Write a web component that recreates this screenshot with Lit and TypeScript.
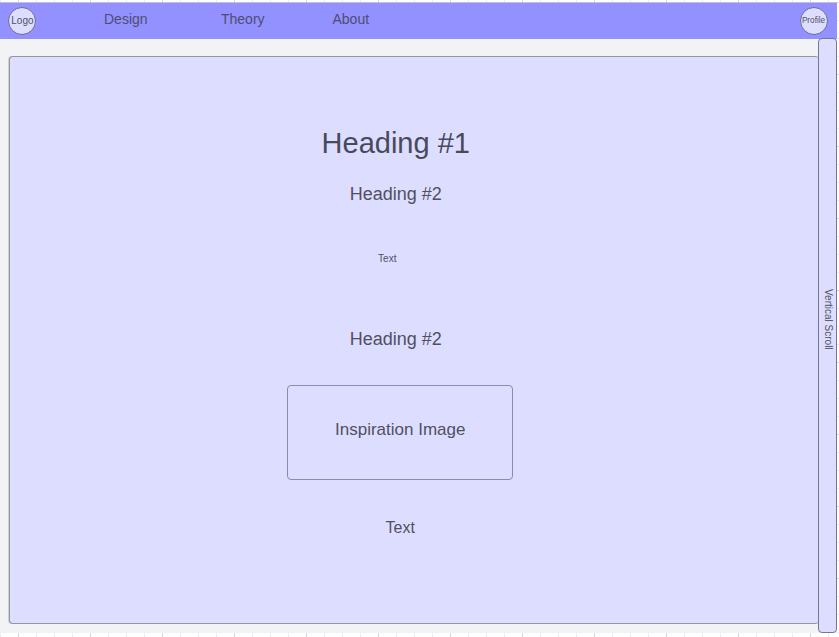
import { LitElement, html, css } from "lit";
import { customElement } from "lit/decorators.js";

@customElement("app-root")
export class AppRoot extends LitElement {
  static styles = css`
    :host {
      display: block;
      box-sizing: border-box;
      width: 839px;
      height: 637px;
      overflow: hidden;
      padding-top: 2px;
      font-family: "Liberation Sans", Arial, sans-serif;
      color: #505063;
      background:
        repeating-linear-gradient(90deg, transparent 0 18px, #dadada 18px 19px, transparent 19px 72px),
        repeating-linear-gradient(90deg, #ececec 0 1px, transparent 1px 18px),
        repeating-linear-gradient(180deg, transparent 0 2px, #dadada 2px 3px, transparent 3px 72px),
        repeating-linear-gradient(180deg, transparent 0 2px, #ececec 2px 3px, transparent 3px 18px),
        #fff;
    }
    * {
      box-sizing: border-box;
    }
    .frame {
      width: 837px;
      height: 631px;
      display: flex;
      flex-direction: column;
      background: #f1f3f5;
    }
    .bar {
      height: 37px;
      flex: none;
      display: flex;
      align-items: flex-start;
      border-top: 1px solid #c2c2d6;
      background: #9391ff;
      padding: 4px 9.5px 0 8.4px;
    }
    .disc {
      width: 28px;
      height: 28px;
      flex: none;
      border: 1px solid #6c6b98;
      border-radius: 50%;
      background: #dddeff;
      display: flex;
      align-items: center;
      justify-content: center;
      font-size: 10px;
      padding-bottom: 2px;
      white-space: nowrap;
    }
    .profile {
      font-size: 8.2px;
      margin-left: auto;
    }
    nav {
      display: flex;
      padding: 4px 0 0 67.6px;
      font-size: 14px;
      line-height: 16px;
      color: #4d4d72;
    }
    nav span:nth-child(1) {
      width: 117px;
    }
    nav span:nth-child(2) {
      width: 111.5px;
    }
    .body {
      flex: 1;
      display: flex;
      min-height: 0;
      margin-top: -1px;
    }
    .page {
      width: 810px;
      height: 568px;
      margin: 18px 0 0 9px;
      border: 1px solid #94959f;
      border-right: 0;
      border-radius: 4px;
      box-shadow: -1px 0 0 #cfd0d3;
      background: #dddeff;
      display: flex;
      flex-direction: column;
      align-items: center;
      padding-right: 37.5px;
    }
    .page > * {
      flex: none;
      margin: 0;
      font-weight: 400;
      white-space: nowrap;
    }
    h1 {
      font-size: 29px;
      line-height: 34px;
      padding-top: 69px;
      color: #484a5c;
    }
    h2 {
      font-size: 18px;
      line-height: 20px;
    }
    .page .first {
      margin-top: 24px;
    }
    .page .small {
      margin: 49px 17px 0 0;
      font-size: 10px;
      line-height: 12px;
    }
    .page .second {
      margin-top: 64px;
    }
    .page .image {
      width: 226px;
      height: 95px;
      margin: 36px 0 0 9px;
      border: 1px solid #8b8ca8;
      border-radius: 4px;
      font-size: 17px;
      line-height: 20px;
      text-align: center;
      padding-top: 34px;
    }
    .page .large {
      margin: 39px 0 0 9px;
      font-size: 16px;
      line-height: 18px;
    }
    .scroll {
      width: 19px;
      height: 595px;
      margin-left: -1px;
      border: 1px solid #77788f;
      border-radius: 4px;
      background: #dddeff;
      writing-mode: vertical-rl;
      display: flex;
      align-items: center;
      justify-content: center;
      font-size: 10px;
      line-height: 12px;
      padding-bottom: 32px;
    }
  `;

  render() {
    return html`
      <div class="frame">
        <header class="bar">
          <div class="disc">Logo</div>
          <nav><span>Design</span><span>Theory</span><span>About</span></nav>
          <div class="disc profile">Profile</div>
        </header>
        <div class="body">
          <main class="page">
            <h1>Heading #1</h1>
            <h2 class="first">Heading #2</h2>
            <p class="small">Text</p>
            <h2 class="second">Heading #2</h2>
            <div class="image">Inspiration Image</div>
            <p class="large">Text</p>
          </main>
          <aside class="scroll">Vertical Scroll</aside>
        </div>
      </div>
    `;
  }
}
